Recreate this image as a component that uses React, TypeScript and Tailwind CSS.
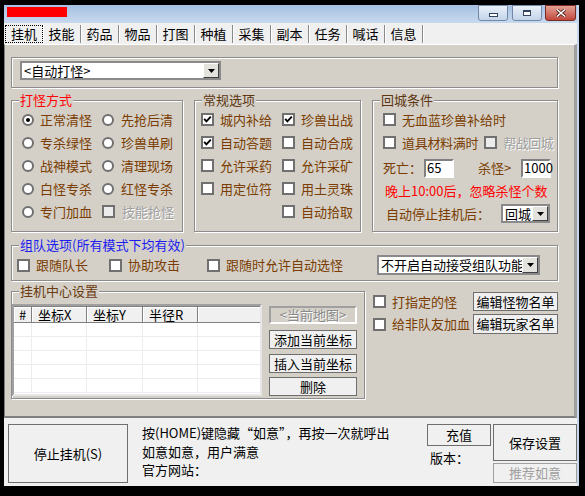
import type { ReactNode } from 'react'

const BROWN = 'text-[#7a3c00]'
const TABS = ['挂机', '技能', '药品', '物品', '打图', '种植', '采集', '副本', '任务', '喊话', '信息']

function Radio({ on }: { on?: boolean }) {
  return (
    <span className="flex h-[12px] w-[12px] shrink-0 items-center justify-center rounded-full border-2 border-[#707070] bg-white">
      {on && <span className="h-[4px] w-[4px] rounded-full bg-black" />}
    </span>
  )
}

function Check({ on, disabled }: { on?: boolean; disabled?: boolean }) {
  return (
    <span
      className={`flex h-[13px] w-[13px] shrink-0 items-center justify-center border-2 border-[#707070] ${disabled ? 'bg-[#ececec]' : 'bg-white'}`}
    >
      {on && (
        <svg width="9" height="9" viewBox="0 0 9 9">
          <path d="M1.2 3.8 L3.4 6.4 L7.8 1.6" stroke="#000" strokeWidth="1.8" fill="none" />
        </svg>
      )}
    </span>
  )
}

function Opt({
  radio,
  on,
  disabled,
  children,
  className = '',
}: {
  radio?: boolean
  on?: boolean
  disabled?: boolean
  children: ReactNode
  className?: string
}) {
  return (
    <div className={`flex items-center gap-[6px] whitespace-nowrap ${className}`}>
      {radio ? <Radio on={on} /> : <Check on={on} disabled={disabled} />}
      <span className={disabled ? 'text-[#a0a0a0] [text-shadow:1px_1px_0_#fff]' : BROWN}>{children}</span>
    </div>
  )
}

function Group({ title, tone, className = '', children }: { title: string; tone: string; className?: string; children: ReactNode }) {
  return (
    <fieldset className={`border border-[#8c8c8c] shadow-[inset_1px_1px_0_#fff,1px_1px_0_#fff] ${className}`}>
      <legend className={`ml-[7px] bg-[#d4d0c8] px-[1px] leading-[14px] ${tone}`}>{title}</legend>
      {children}
    </fieldset>
  )
}

function Arrow() {
  return (
    <svg width="7" height="4" viewBox="0 0 7 4">
      <polygon points="0,0 7,0 3.5,4" fill="#000" />
    </svg>
  )
}

function Combo({ text, className = '', clip }: { text: string; className?: string; clip?: boolean }) {
  return (
    <div className={`flex items-stretch border-2 border-[#8a8a8a] bg-white ${className}`}>
      <span className={`flex flex-1 items-center whitespace-nowrap pl-[2px] text-black ${clip ? 'overflow-hidden' : ''}`}>{text}</span>
      <span className="flex w-[16px] shrink-0 items-center justify-center border border-t-white border-l-white border-b-[#404040] border-r-[#404040] bg-[#e4e2dc]">
        <Arrow />
      </span>
    </div>
  )
}

function Field({ value }: { value: string }) {
  return (
    <span className="flex h-[19px] w-[30px] items-center border-2 border-t-[#808080] border-l-[#808080] border-b-white border-r-white bg-white pl-[1px] text-black">
      {value}
    </span>
  )
}

function Btn({ children, className = '', disabled }: { children: ReactNode; className?: string; disabled?: boolean }) {
  return (
    <button
      className={`flex items-center justify-center whitespace-nowrap border bg-[#f0f0f0] ${disabled ? 'border-[#a0a0a0] text-[#a0a0a0]' : 'border-[#6e6e6e] text-black'} ${className}`}
    >
      {children}
    </button>
  )
}

export default function App() {
  return (
    <div className="h-[496px] w-[585px] overflow-hidden bg-black pl-[4px] pt-[5px] font-['Noto_Sans_CJK_SC',sans-serif] text-[13px] leading-[14px]">
      <div className="flex h-[481px] w-[575px] flex-col border-r-2 border-[#c8d8ec] bg-[#f0f0f0]">
        {/* title bar */}
        <div className="flex h-[18px] items-start bg-linear-to-b from-[#a6c0e2] to-[#c8d9ee]">
          <div className="ml-[3px] mt-[2px] h-[10px] w-[60px] bg-[#ff0000]" />
          <div className="ml-auto mr-[1px] flex h-[16px]">
            <div className="flex h-[16px] w-[30px] items-end justify-center rounded-b-[3px] border border-[#7388a8] bg-linear-to-b from-[#eaf1fa] to-[#c4d4e9] pb-[3px]">
              <span className="h-[4px] w-[9px] border border-[#34465e] bg-white" />
            </div>
            <div className="ml-[4px] flex h-[16px] w-[30px] items-center justify-center rounded-b-[3px] border border-[#7388a8] bg-linear-to-b from-[#eaf1fa] to-[#c4d4e9]">
              <span className="h-[6px] w-[8px] border border-t-2 border-[#34465e] bg-white" />
            </div>
            <div className="ml-[3px] flex h-[16px] w-[31px] items-center justify-center rounded-b-[3px] border border-[#7a2b22] bg-linear-to-b from-[#e3a194] to-[#c0463c]">
              <svg width="12" height="8" viewBox="0 0 12 8">
                <path d="M2 0.5 L10 7.5 M10 0.5 L2 7.5" stroke="#3a1410" strokeWidth="3" />
                <path d="M2 0.5 L10 7.5 M10 0.5 L2 7.5" stroke="#fff" strokeWidth="1.6" />
              </svg>
            </div>
          </div>
        </div>

        {/* tabs */}
        <div className="flex h-[21px] items-start bg-[#f0f0f0] pl-[1px] pt-[2px]">
          {TABS.map((t, i) => (
            <div
              key={t}
              className={`flex h-[18px] w-[38px] items-center justify-center text-black shadow-[1px_0_0_#fff] ${i === 0 ? 'border border-dotted border-black' : 'border-r border-r-[#8a8a8a]'}`}
            >
              {t}
            </div>
          ))}
        </div>

        {/* page */}
        <div className="flex h-[374px] w-[573px] flex-col border-t border-l border-r-[3px] border-b-2 border-t-white border-l-[#808080] border-r-[#a0a0a0] border-b-[#808080] bg-[#d4d0c8] pl-[6px]">
          <div className="flex w-[547px] flex-col">
            <div className="mt-[12px] h-[31px] border border-[#8c8c8c] pl-[8px] pt-[3px] shadow-[inset_1px_1px_0_#fff,1px_1px_0_#fff]">
              <Combo text="<自动打怪>" className="h-[19px] w-[201px]" />
            </div>

            <div className="mt-[5px] flex gap-[11px]">
              <Group title="打怪方式" tone="text-[#ff0000]" className="h-[139px] w-[172px]">
                <div className="grid grid-cols-[80px_1fr] pl-[10px] pt-[1px] [&>div]:h-[23px]">
                  <Opt radio on>正常清怪</Opt>
                  <Opt radio className="gap-[7px]">先抢后清</Opt>
                  <Opt radio>专杀绿怪</Opt>
                  <Opt radio className="gap-[7px]">珍兽单刷</Opt>
                  <Opt radio>战神模式</Opt>
                  <Opt radio className="gap-[7px]">清理现场</Opt>
                  <Opt radio>白怪专杀</Opt>
                  <Opt radio className="gap-[7px]">红怪专杀</Opt>
                  <Opt radio>专门加血</Opt>
                  <Opt disabled className="gap-[7px]">技能抢怪</Opt>
                </div>
              </Group>

              <Group title="常规选项" tone="text-[#5c3610]" className="h-[139px] w-[167px]">
                <div className="grid grid-cols-[81px_1fr] pl-[6px] pt-[1px] [&>div]:h-[23px]">
                  <Opt on>城内补给</Opt>
                  <Opt on>珍兽出战</Opt>
                  <Opt on>自动答题</Opt>
                  <Opt>自动合成</Opt>
                  <Opt>允许采药</Opt>
                  <Opt>允许采矿</Opt>
                  <Opt>用定位符</Opt>
                  <Opt>用土灵珠</Opt>
                  <div />
                  <Opt>自动拾取</Opt>
                </div>
              </Group>

              <Group title="回城条件" tone="text-[#5c3610]" className="h-[139px] w-[186px]">
                <div className="flex flex-col pl-[10px] pt-[1px]">
                  <Opt className="h-[23px]">无血蓝珍兽补给时</Opt>
                  <div className="flex h-[23px] items-center">
                    <Opt className="tracking-[-0.3px]">道具材料满时</Opt>
                    <Opt disabled className="ml-[6px] tracking-[-0.5px]">帮战回城</Opt>
                  </div>
                  <div className={`flex h-[28px] items-center whitespace-nowrap ${BROWN}`}>
                    <span className="w-[41px]">死亡：</span>
                    <Field value="65" />
                    <span className="ml-[24px] w-[43px]">杀怪&gt;</span>
                    <Field value="1000" />
                  </div>
                  <div className="flex h-[18px] items-center whitespace-nowrap pl-[2px] text-[#ff0000]">晚上10:00后，忽略杀怪个数</div>
                  <div className={`flex h-[27px] items-center whitespace-nowrap pl-[3px] ${BROWN}`}>
                    <span className="w-[115px]">自动停止挂机后：</span>
                    <Combo text="回城" className="h-[19px] w-[49px]" />
                  </div>
                </div>
              </Group>
            </div>

            <Group title="组队选项(所有模式下均有效)" tone="text-[#1c1cf0]" className="mt-[6px] h-[43px] w-[547px]">
              <div className="flex h-[26px] items-center pl-[5px]">
                <Opt className="w-[92px] gap-[5px]">跟随队长</Opt>
                <Opt className="w-[98px] gap-[5px]">协助攻击</Opt>
                <Opt className="w-[170px] gap-[5px]">跟随时允许自动选怪</Opt>
                <Combo clip text="不开启自动接受组队功能" className="h-[20px] w-[163px]" />
              </div>
            </Group>

            <div className="mt-[3px] flex gap-[8px]">
              <Group title="挂机中心设置" tone="text-[#6a3c10]" className="h-[115px] w-[354px]">
                <div className="mt-[6px] flex">
                  <div className="h-[92px] w-[250px] border-2 border-t-[#a0a0a0] border-l-[#a0a0a0] border-b-[#e6e6e6] border-r-[#e6e6e6] bg-white text-black">
                    <div className="flex h-[17px] border-y border-[#808080] bg-[#f0f0f0]">
                      <span className="flex w-[18px] items-center justify-center border-r border-[#808080] shadow-[inset_1px_1px_0_#fff]">#</span>
                      <span className="flex w-[55px] items-center border-r border-[#808080] pl-[6px] shadow-[inset_1px_1px_0_#fff]">坐标X</span>
                      <span className="flex w-[56px] items-center border-r border-[#808080] pl-[6px] shadow-[inset_1px_1px_0_#fff]">坐标Y</span>
                      <span className="flex w-[55px] items-center border-r border-[#808080] pl-[6px] shadow-[inset_1px_1px_0_#fff]">半径R</span>
                      <span className="flex-1 shadow-[inset_1px_1px_0_#fff]" />
                    </div>
                    {[0, 1, 2, 3, 4].map((r) => (
                      <div key={r} className="flex h-[14px] border-b border-[#ececec]">
                        <span className="w-[18px] border-r border-[#ececec]" />
                        <span className="w-[55px] border-r border-[#ececec]" />
                        <span className="w-[56px] border-r border-[#ececec]" />
                        <span className="w-[55px] border-r border-[#ececec]" />
                        <span className="flex-1" />
                      </div>
                    ))}
                  </div>
                  <div className="ml-[7px] flex w-[88px] flex-col pt-[2px]">
                    <div className="flex h-[18px] items-center justify-center border-2 border-t-[#a0a0a0] border-l-[#a0a0a0] border-b-white border-r-white bg-[#d4d0c8] text-[#8a8a8a] [text-shadow:1px_1px_0_#fff]">
                      &lt;当前地图&gt;
                    </div>
                    <Btn className="mt-[6px] h-[19px]">添加当前坐标</Btn>
                    <Btn className="mt-[5px] h-[19px]">插入当前坐标</Btn>
                    <Btn className="mt-[4px] h-[19px]">删除</Btn>
                  </div>
                </div>
              </Group>

              <div className="flex w-[185px] flex-col pt-[8px]">
                <div className="flex h-[19px] items-center">
                  <Opt>打指定的怪</Opt>
                  <Btn className="ml-auto h-[19px] w-[85px]">编辑怪物名单</Btn>
                </div>
                <div className="mt-[3px] flex h-[20px] items-center">
                  <Opt>给非队友加血</Opt>
                  <Btn className="ml-auto h-[20px] w-[85px]">编辑玩家名单</Btn>
                </div>
              </div>
            </div>
          </div>
        </div>

        {/* bottom bar */}
        <div className="flex h-[68px] pl-[4px] pt-[6px] text-black">
          <Btn className="h-[59px] w-[120px]">停止挂机(S)</Btn>
          <div className="ml-[14px] w-[285px] whitespace-nowrap leading-[18.5px]">
            <div>按(HOME)键隐藏“如意”，再按一次就呼出</div>
            <div>如意如意，用户满意</div>
            <div>官方网站：</div>
          </div>
          <div className="flex w-[64px] flex-col">
            <Btn className="h-[22px]">充值</Btn>
            <div className="flex h-[24px] items-center pl-[3px]">版本：</div>
          </div>
          <div className="ml-[2px] flex w-[84px] flex-col">
            <Btn className="h-[37px]">保存设置</Btn>
            <Btn disabled className="mt-[2px] h-[20px]">推荐如意</Btn>
          </div>
        </div>
      </div>
    </div>
  )
}
